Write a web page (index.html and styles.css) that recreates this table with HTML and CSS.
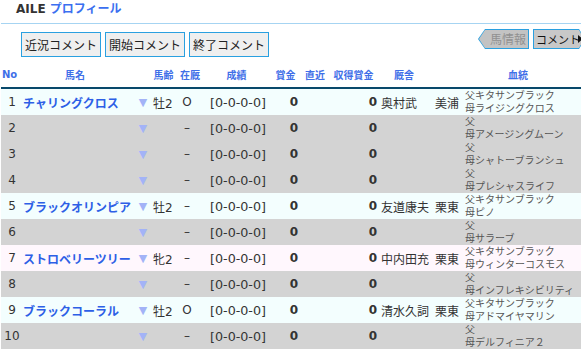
FILE: index.html
```html
<!DOCTYPE html>
<html lang="ja">
<head>
<meta charset="utf-8">
<title>AILE プロフィール</title>
<link rel="stylesheet" href="styles.css">
</head>
<body>
<div class="page">
  <h1 class="title"><span class="title-en">AILE</span> <span class="title-jp">プロフィール</span></h1>
  <div class="toolbar">
    <div class="btns">
      <button class="btn">近況コメント</button>
      <button class="btn">開始コメント</button>
      <button class="btn">終了コメント</button>
    </div>
    <div class="tabs">
      <span class="tab tab-prev"><span class="tab-in">馬情報</span></span>
      <span class="tab tab-next"><span class="tab-in">コメント<svg class="tab-tri" width="5" height="8" viewBox="0 0 5 8"><polygon points="0,0 5,4 0,8" fill="#111"/></svg></span></span>
    </div>
  </div>
  <table class="list">
    <colgroup>
      <col class="w-no"><col class="w-name"><col class="w-arr"><col class="w-age"><col class="w-zk"><col class="w-rec"><col class="w-prize"><col class="w-recent"><col class="w-earn"><col class="w-tr"><col class="w-bl"><col class="w-ped">
    </colgroup>
    <thead>
      <tr>
        <th class="h-no">No</th>
        <th class="h-name">馬名</th>
        <th></th>
        <th>馬齢</th>
        <th>在厩</th>
        <th>成績</th>
        <th>賞金</th>
        <th>直近</th>
        <th>収得賞金</th>
        <th>厩舎</th>
        <th></th>
        <th class="h-ped">血統</th>
      </tr>
    </thead>
    <tbody>
      <tr class="r-m">
        <td class="c-no">1</td><td class="c-name"><a href="#">チャリングクロス</a></td><td class="c-arr">▼</td><td class="c-age">牡2</td><td class="c-zk">O</td><td class="c-rec">[0-0-0-0]</td><td class="c-prize">0</td><td></td><td class="c-earn">0</td><td class="c-tr">奥村武</td><td class="c-bl">美浦</td><td class="c-ped">父キタサンブラック<br>母ライジングクロス</td>
      </tr>
      <tr class="r-e">
        <td class="c-no">2</td><td class="c-name"></td><td class="c-arr">▼</td><td class="c-age"></td><td class="c-zk">–</td><td class="c-rec">[0-0-0-0]</td><td class="c-prize">0</td><td></td><td class="c-earn">0</td><td class="c-tr"></td><td class="c-bl"></td><td class="c-ped">父<br>母アメージングムーン</td>
      </tr>
      <tr class="r-e">
        <td class="c-no">3</td><td class="c-name"></td><td class="c-arr">▼</td><td class="c-age"></td><td class="c-zk">–</td><td class="c-rec">[0-0-0-0]</td><td class="c-prize">0</td><td></td><td class="c-earn">0</td><td class="c-tr"></td><td class="c-bl"></td><td class="c-ped">父<br>母シャトーブランシュ</td>
      </tr>
      <tr class="r-e">
        <td class="c-no">4</td><td class="c-name"></td><td class="c-arr">▼</td><td class="c-age"></td><td class="c-zk">–</td><td class="c-rec">[0-0-0-0]</td><td class="c-prize">0</td><td></td><td class="c-earn">0</td><td class="c-tr"></td><td class="c-bl"></td><td class="c-ped">父<br>母プレシャスライフ</td>
      </tr>
      <tr class="r-m">
        <td class="c-no">5</td><td class="c-name"><a href="#">ブラックオリンピア</a></td><td class="c-arr">▼</td><td class="c-age">牡2</td><td class="c-zk">–</td><td class="c-rec">[0-0-0-0]</td><td class="c-prize">0</td><td></td><td class="c-earn">0</td><td class="c-tr">友道康夫</td><td class="c-bl">栗東</td><td class="c-ped">父キタサンブラック<br>母ピノ</td>
      </tr>
      <tr class="r-e">
        <td class="c-no">6</td><td class="c-name"></td><td class="c-arr">▼</td><td class="c-age"></td><td class="c-zk">–</td><td class="c-rec">[0-0-0-0]</td><td class="c-prize">0</td><td></td><td class="c-earn">0</td><td class="c-tr"></td><td class="c-bl"></td><td class="c-ped">父<br>母サラーブ</td>
      </tr>
      <tr class="r-f">
        <td class="c-no">7</td><td class="c-name"><a href="#">ストロベリーツリー</a></td><td class="c-arr">▼</td><td class="c-age">牝2</td><td class="c-zk">–</td><td class="c-rec">[0-0-0-0]</td><td class="c-prize">0</td><td></td><td class="c-earn">0</td><td class="c-tr">中内田充</td><td class="c-bl">栗東</td><td class="c-ped">父キタサンブラック<br>母ウィンターコスモス</td>
      </tr>
      <tr class="r-e">
        <td class="c-no">8</td><td class="c-name"></td><td class="c-arr">▼</td><td class="c-age"></td><td class="c-zk">–</td><td class="c-rec">[0-0-0-0]</td><td class="c-prize">0</td><td></td><td class="c-earn">0</td><td class="c-tr"></td><td class="c-bl"></td><td class="c-ped">父<br>母インフレキシビリティ</td>
      </tr>
      <tr class="r-m">
        <td class="c-no">9</td><td class="c-name"><a href="#">ブラックコーラル</a></td><td class="c-arr">▼</td><td class="c-age">牡2</td><td class="c-zk">O</td><td class="c-rec">[0-0-0-0]</td><td class="c-prize">0</td><td></td><td class="c-earn">0</td><td class="c-tr">清水久詞</td><td class="c-bl">栗東</td><td class="c-ped">父キタサンブラック<br>母アドマイヤマリン</td>
      </tr>
      <tr class="r-e">
        <td class="c-no">10</td><td class="c-name"></td><td class="c-arr">▼</td><td class="c-age"></td><td class="c-zk">–</td><td class="c-rec">[0-0-0-0]</td><td class="c-prize">0</td><td></td><td class="c-earn">0</td><td class="c-tr"></td><td class="c-bl"></td><td class="c-ped">父<br>母デルフィニア２</td>
      </tr>
    </tbody>
  </table>
</div>
</body>
</html>
```
FILE: styles.css
```css
html, body {
  margin: 0;
  padding: 0;
  overflow: hidden;
  background: #ffffff;
}
body {
  font-family: "DejaVu Sans", "Noto Sans CJK JP", sans-serif;
  font-size: 12px;
  color: #333333;
}
.page {
  width: 583px;
  padding-left: 1px;
}
.title {
  margin: 0;
  padding: 0 0 5px 15px;
  height: 18px;
  line-height: 18px;
  font-size: 12px;
  font-weight: bold;
  border-bottom: 1px solid #a6d4f2;
  white-space: nowrap;
}
.title-en {
  color: #333333;
}
.title-jp {
  color: #3b6ff0;
}
.toolbar {
  display: flex;
  justify-content: space-between;
  align-items: flex-start;
  margin-top: 5px;
}
.btns {
  display: flex;
  gap: 4px;
  padding-left: 20px;
  margin-top: 3px;
}
.btn {
  width: 80px;
  height: 25px;
  padding: 0;
  margin: 0;
  border: 1px solid #2aa0e0;
  background: #efefef;
  color: #222222;
  font-family: "Noto Sans CJK JP", sans-serif;
  font-size: 12px;
  line-height: 23px;
}
.tabs {
  display: flex;
  gap: 4px;
  margin-right: -1px;
}
.tab {
  display: block;
  height: 20px;
  padding: 1px;
  box-sizing: border-box;
  background: #2aa0e0;
}
.tab-in {
  display: flex;
  align-items: center;
  height: 18px;
  font-family: "Noto Sans CJK JP", sans-serif;
  font-size: 12px;
  line-height: 18px;
  white-space: nowrap;
}
.tab-prev {
  width: 51px;
  clip-path: polygon(7px 0, 100% 0, 100% 100%, 7px 100%, 0 50%);
}
.tab-prev .tab-in {
  width: 49px;
  padding-left: 11px;
  box-sizing: border-box;
  background: #c3c3c3;
  color: #919191;
  clip-path: polygon(6px 0, 100% 0, 100% 100%, 6px 100%, 0 50%);
}
.tab-next {
  width: 52px;
  clip-path: polygon(0 0, 46px 0, 100% 50%, 46px 100%, 0 100%);
}
.tab-next .tab-in {
  width: 50px;
  padding-left: 2px;
  box-sizing: border-box;
  background: #c8c8c8;
  color: #111111;
  font-size: 11px;
  clip-path: polygon(0 0, 45px 0, 100% 50%, 45px 100%, 0 100%);
}
.tab-tri {
  flex: none;
  margin-left: -2px;
}
.list {
  margin-top: 5px;
  width: 580px;
  table-layout: fixed;
  border-collapse: collapse;
}
.w-no { width: 22px; }
.w-name { width: 114px; }
.w-arr { width: 13px; }
.w-age { width: 27px; }
.w-zk { width: 26px; }
.w-rec { width: 67px; }
.w-prize { width: 31px; }
.w-recent { width: 28px; }
.w-earn { width: 49px; }
.w-tr { width: 52px; }
.w-bl { width: 34px; }
.w-ped { width: 117px; }
.list th {
  height: 25px;
  padding: 0;
  font-size: 10px;
  font-weight: bold;
  color: #3f6fe8;
  text-align: center;
  white-space: nowrap;
  border-bottom: 2px solid #08496b;
}
.list th.h-no {
  text-align: left;
  padding-left: 1px;
}
.list th.h-name {
  text-align: left;
  padding-left: 42px;
}
.list th.h-ped {
  padding-right: 9px;
}
.list td {
  height: 26px;
  padding: 0;
  white-space: nowrap;
  overflow: hidden;
  vertical-align: middle;
}
.r-m { background: #f3fefe; }
.r-f { background: #fff7fd; }
.r-e { background: #d3d3d3; }
.c-no {
  text-align: center;
}
.c-name {
  padding-left: 2px;
  font-family: "Noto Sans CJK JP", sans-serif;
}
.c-name a {
  color: #2d5fe6;
  font-weight: bold;
  text-decoration: none;
}
.list td.c-arr {
  text-align: center;
  padding-right: 1px;
  font-size: 11px;
  color: #a3b3f7;
}
.list td.c-age {
  padding-left: 3px;
}
.list td.c-zk {
  text-align: center;
  padding-right: 6px;
}
.list td.c-rec {
  text-align: center;
  padding-left: 3px;
  font-size: 12.7px;
}
.list td.c-prize {
  text-align: right;
  padding-right: 3px;
  font-weight: bold;
}
.list td.c-earn {
  text-align: right;
  padding-right: 1px;
  font-weight: bold;
}
.list td.c-tr {
  padding-left: 3px;
  overflow: visible;
}
.list td.c-bl {
  text-align: center;
}
.list td.c-ped {
  padding-left: 1px;
  font-size: 10px;
  line-height: 13px;
  color: #555555;
  vertical-align: top;
}
```
